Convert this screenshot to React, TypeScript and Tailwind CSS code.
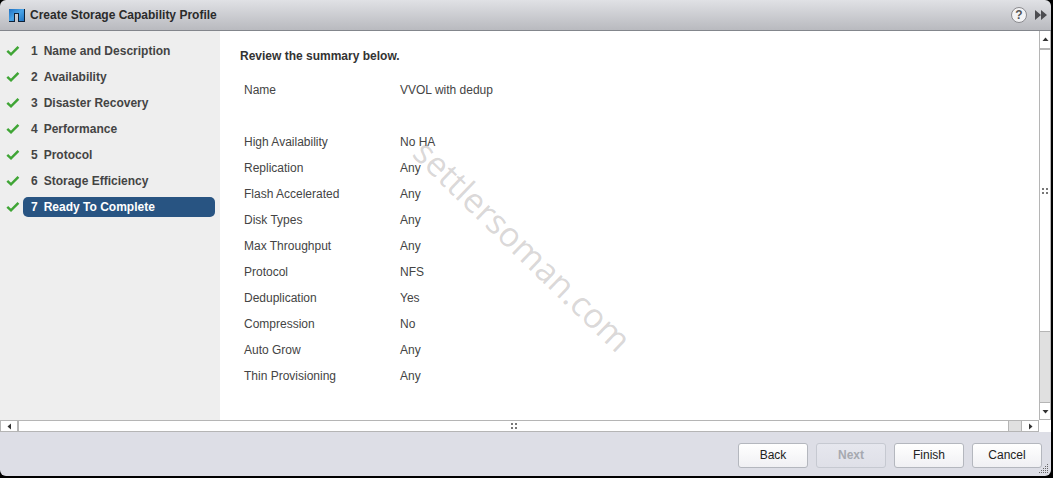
import { useState } from "react";

const steps = [
  "Name and Description",
  "Availability",
  "Disaster Recovery",
  "Performance",
  "Protocol",
  "Storage Efficiency",
  "Ready To Complete",
];

const summary = [
  ["High Availability", "No HA"],
  ["Replication", "Any"],
  ["Flash Accelerated", "Any"],
  ["Disk Types", "Any"],
  ["Max Throughput", "Any"],
  ["Protocol", "NFS"],
  ["Deduplication", "Yes"],
  ["Compression", "No"],
  ["Auto Grow", "Any"],
  ["Thin Provisioning", "Any"],
];

function CheckMark() {
  return (
    <svg width="14" height="12" viewBox="0 0 14 12" fill="none" className="shrink-0" aria-hidden="true">
      <path d="M1.3 5.8 L5 9.3 L12.4 1.8" stroke="#3fa535" strokeWidth="2.5" />
    </svg>
  );
}

function ProductLogo() {
  return (
    <svg width="16" height="14" viewBox="0 0 16 14" className="shrink-0" aria-hidden="true">
      <defs>
        <linearGradient id="logo-blue" x1="0" y1="0" x2="1" y2="1">
          <stop offset="0" stopColor="#1f6fc0" />
          <stop offset="0.5" stopColor="#49a3e6" />
          <stop offset="1" stopColor="#1f74c4" />
        </linearGradient>
      </defs>
      <path d="M0 1H16V14H9V6H6V14H0Z" fill="#0e2138" />
      <path d="M0 1H15V13H10V5H5V13H0Z" fill="url(#logo-blue)" />
      <path d="M5 5H10V6H6V13H5Z" fill="#0e2138" />
    </svg>
  );
}

function Arrow({ d }: { d: string }) {
  return (
    <svg width="7" height="7" viewBox="0 0 7 7" className="shrink-0" aria-hidden="true">
      <path d={d} fill="#333" />
    </svg>
  );
}

function Grip() {
  return (
    <svg width="6" height="6" viewBox="0 0 6 6" aria-hidden="true">
      <path d="M0 0h2v2H0zM4 0h2v2H4zM0 4h2v2H0zM4 4h2v2H4z" fill="#777" />
    </svg>
  );
}

function ResizeHandle() {
  return (
    <svg width="10" height="10" viewBox="0 0 10 10" className="absolute right-0.5 bottom-0.5" aria-hidden="true">
      <path
        d="M8 0h1v1H8zM6 2h1v1H6zM8 2h1v1H8zM4 4h1v1H4zM6 4h1v1H6zM8 4h1v1H8zM2 6h1v1H2zM4 6h1v1H4zM6 6h1v1H6zM8 6h1v1H8zM0 8h1v1H0zM2 8h1v1H2zM4 8h1v1H4zM6 8h1v1H6zM8 8h1v1H8z"
        fill="#666"
      />
    </svg>
  );
}

function VerticalScrollbar() {
  return (
    <div className="flex w-3 shrink-0 flex-col border-x border-[#b5b5b5] bg-[#e0e0e0]">
      <button aria-label="Scroll up" className="flex h-[19px] items-center justify-center border-b-2 border-[#b5b5b5] bg-white">
        <Arrow d="M0.5 5L3.5 1.5L6.5 5Z" />
      </button>
      <div className="flex flex-1 items-center justify-center border-b border-[#b5b5b5] bg-white">
        <Grip />
      </div>
      <div className="h-[70px]" />
      <button aria-label="Scroll down" className="flex h-[18px] items-center justify-center border-y border-[#b5b5b5] bg-white">
        <Arrow d="M0.5 2L3.5 5.5L6.5 2Z" />
      </button>
    </div>
  );
}

function HorizontalScrollbar() {
  return (
    <div className="flex h-3 bg-white pr-3">
      <div className="flex flex-1 border border-[#b5b5b5] bg-[#e0e0e0]">
        <button aria-label="Scroll left" className="flex w-[18px] items-center justify-center border-r-2 border-[#b5b5b5] bg-white">
          <Arrow d="M5 0.5L1.5 3.5L5 6.5Z" />
        </button>
        <div className="flex flex-1 items-center justify-center border-r border-[#b5b5b5] bg-white">
          <Grip />
        </div>
        <div className="w-3" />
        <button aria-label="Scroll right" className="flex w-[17px] items-center justify-center border-l border-[#b5b5b5] bg-white">
          <Arrow d="M2 0.5L5.5 3.5L2 6.5Z" />
        </button>
      </div>
    </div>
  );
}

function FooterButton({ label, disabled = false }: { label: string; disabled?: boolean }) {
  return (
    <button
      disabled={disabled}
      className="h-[25px] w-[70px] rounded-[3px] border border-[#b4b7be] bg-linear-to-b from-white to-[#f0f0f3] text-[#222] disabled:border-[#c6c9d1] disabled:from-[#e6e7ee] disabled:to-[#dfe0e8] disabled:font-bold disabled:text-[#a6a9b0]"
    >
      {label}
    </button>
  );
}

export default function App() {
  const [current, setCurrent] = useState(6);

  return (
    <div className="bg-black pr-0.5 font-['Liberation_Sans',Arial,sans-serif] text-xs text-[#444]">
      <div className="flex min-h-screen flex-col bg-black pb-0.5">
        <header className="flex h-[31px] items-center rounded-t-md border-b border-[#83868c] bg-linear-to-b from-[#e0e1e5] to-[#b9babf] pr-1 pl-[9px]">
          <ProductLogo />
          <h1 className="ml-[5px] flex-1 font-bold text-[#2b2b2b]">Create Storage Capability Profile</h1>
          <button
            aria-label="Help"
            className="flex size-4 items-center justify-center rounded-full border border-[#8a8a8e] bg-[#f3f3f5] font-bold text-[#555]"
          >
            ?
          </button>
          <button aria-label="Expand" className="ml-2">
            <svg width="12" height="10" viewBox="0 0 12 10" aria-hidden="true">
              <path d="M0 0L6 5L0 10ZM6 0L12 5L6 10Z" fill="#4c4c50" />
            </svg>
          </button>
        </header>

        <div className="flex flex-1 bg-white">
          <nav className="w-[220px] shrink-0 bg-[#eeeeee] pt-[7px] pr-[5px] pl-1.5">
            <ol>
              {steps.map((step, i) => (
                <li key={step} className="flex h-[26px] items-center gap-[3px]">
                  <CheckMark />
                  <button
                    onClick={() => setCurrent(i)}
                    aria-current={i === current ? "step" : undefined}
                    className="flex h-5 flex-1 items-center gap-1.5 rounded-[5px] px-2 font-bold text-[#444] aria-[current=step]:bg-[#285482] aria-[current=step]:text-white"
                  >
                    <span>{i + 1}</span>
                    <span>{step}</span>
                  </button>
                </li>
              ))}
            </ol>
          </nav>

          <main className="relative flex-1 pt-4 pl-5">
            <h2 className="leading-[18px] font-bold text-[#333]">Review the summary below.</h2>
            <table className="mt-3 ml-1 text-left">
              <tbody>
                <tr className="h-[52px] align-top">
                  <th className="w-[156px] pt-[5px] font-normal">Name</th>
                  <td className="pt-[5px]">VVOL with dedup</td>
                </tr>
                {summary.map(([label, value]) => (
                  <tr key={label} className="h-[26px]">
                    <th className="font-normal">{label}</th>
                    <td>{value}</td>
                  </tr>
                ))}
              </tbody>
            </table>
            <span className="pointer-events-none absolute top-[98px] left-[200px] origin-left rotate-44 font-['Open_Sans','Noto_Sans',sans-serif] text-[34px] leading-none text-[#807878]/30">
              settlersoman.com
            </span>
          </main>

          <VerticalScrollbar />
        </div>

        <HorizontalScrollbar />

        <footer className="relative flex h-11 items-center justify-end gap-2 rounded-b-md bg-[#dddee6] pr-[9px] pt-0.5">
          <FooterButton label="Back" />
          <FooterButton label="Next" disabled />
          <FooterButton label="Finish" />
          <FooterButton label="Cancel" />
          <ResizeHandle />
        </footer>
      </div>
    </div>
  );
}
